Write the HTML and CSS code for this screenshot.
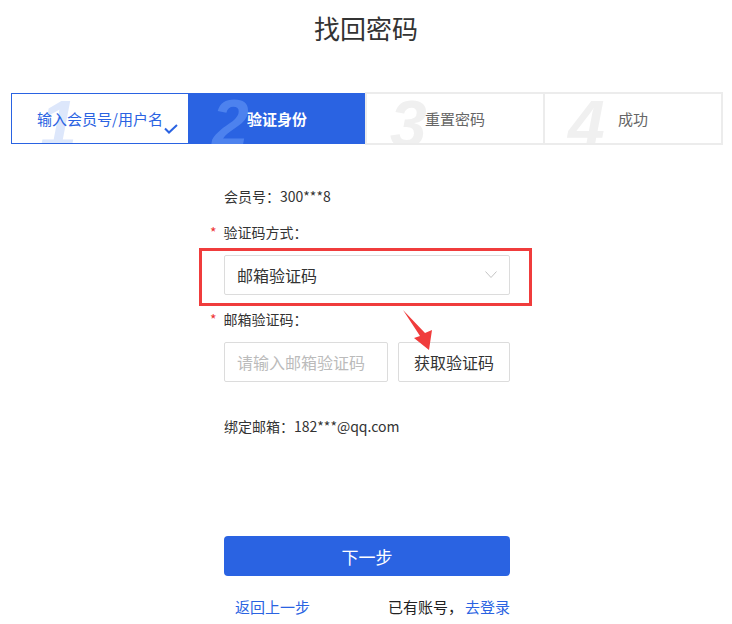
FILE: index.html
```html
<!DOCTYPE html>
<html lang="zh-CN">
<head>
    <meta charset="UTF-8">
    <title>找回密码</title>
    <link rel="stylesheet" href="styles.css">
</head>
<body>
    <h1 class="page-title">找回密码</h1>

    <div class="steps">
        <div class="step step-done">
            <span class="step-num" aria-hidden="true">1</span>
            <span class="step-text">输入会员号/用户名</span>
            <svg class="step-check" width="14" height="10" viewBox="0 0 14 10"><polyline points="1,4.5 5,8.5 13,1" fill="none" stroke="#2a63e2" stroke-width="2"/></svg>
        </div>
        <div class="step step-active">
            <span class="step-num" aria-hidden="true">2</span>
            <span class="step-text">验证身份</span>
        </div>
        <div class="step step-todo step-three">
            <span class="step-num" aria-hidden="true">3</span>
            <span class="step-text">重置密码</span>
        </div>
        <div class="step step-todo step-four">
            <span class="step-num" aria-hidden="true">4</span>
            <span class="step-text">成功</span>
        </div>
    </div>

    <div class="form">
        <div class="info-row">会员号：300***8</div>

        <div class="field-label required">验证码方式：</div>
        <div class="select-wrap">
            <div class="select-box">
                <span>邮箱验证码</span>
                <svg width="12" height="8" viewBox="0 0 12 8"><polyline points="0.5,0.5 6,6.5 11.5,0.5" fill="none" stroke="#c4c4c4" stroke-width="1"/></svg>
            </div>
            <div class="highlight-box"></div>
        </div>

        <div class="field-label required label-code">邮箱验证码：</div>
        <div class="code-row">
            <div class="code-input">请输入邮箱验证码</div>
            <button class="code-btn">获取验证码</button>
        </div>

        <div class="info-row info-mail">绑定邮箱：182***@qq.com</div>

        <button class="next-btn">下一步</button>

        <div class="bottom-links">
            <a class="link back-link">返回上一步</a>
            <span>已有账号，<a class="link login-link">去登录</a></span>
        </div>
    </div>

    <svg class="note-arrow" width="40" height="50" viewBox="0 0 40 50">
        <polygon points="3,5 25,28 32,25 29,45 14,33 20,31" fill="#f03c3c"/>
    </svg>
</body>
</html>
```

FILE: styles.css
```css
body {
    margin: 0;
    font-family: "Noto Sans CJK SC", "Liberation Sans", sans-serif;
    color: #333;
    background: #fff;
}

.page-title {
    margin: 10px 0 0;
    font-size: 26px;
    line-height: 36px;
    font-weight: normal;
    text-align: center;
    color: #333;
}

/* 步骤条 */
.steps {
    display: flex;
    align-items: center;
    margin: 46px 9px 0 11px;
}

.step {
    position: relative;
    flex: 1;
    height: 51px;
    box-sizing: border-box;
    display: flex;
    align-items: center;
    justify-content: center;
    overflow: hidden;
    font-size: 15px;
}

.step-num {
    position: absolute;
    top: -3px;
    left: 23px;
    font-family: "Liberation Sans", sans-serif;
    font-size: 66px;
    line-height: 1;
    font-weight: bold;
    font-style: italic;
}

.step-text {
    position: relative;
}

.step-done {
    border: 1px solid #2a63e2;
    color: #2a63e2;
}

.step-done .step-num {
    color: #dde7fb;
    left: 28px;
}

.step-check {
    position: absolute;
    left: 152px;
    top: 30px;
}

.step-active {
    background: #2a63e2;
    color: #fff;
    font-weight: bold;
}

.step-active .step-num {
    color: #4d82ee;
}

.step-todo {
    height: 53px;
    border: 2px solid #ececec;
    color: #666;
}

.step-todo .step-num {
    color: #f0f0f0;
}

.step-three {
    border-right-width: 1px;
}

.step-four {
    border-left-width: 1px;
}

/* 表单 */
.form {
    width: 286px;
    margin: 41px 0 0 calc(50% - 142px);
    font-size: 14px;
}

.info-row {
    line-height: 20px;
}

.field-label {
    margin-top: 16px;
    line-height: 20px;
}

.required::before {
    content: "*";
    color: #e33;
    margin-left: -14px;
    margin-right: 7px;
}

.label-code {
    margin-top: 14px;
}

.select-wrap {
    position: relative;
    margin-top: 13px;
}

.select-box {
    height: 40px;
    box-sizing: border-box;
    border: 1px solid #dcdcdc;
    border-radius: 2px;
    padding: 0 12px;
    display: flex;
    align-items: center;
    justify-content: space-between;
    font-size: 16px;
    color: #333;
}

.highlight-box {
    position: absolute;
    top: -7px;
    left: -25px;
    right: -22px;
    bottom: -11px;
    border: 3px solid #f03c3c;
}

.code-row {
    display: flex;
    gap: 10px;
    margin-top: 13px;
}

.code-input,
.code-btn {
    height: 40px;
    box-sizing: border-box;
    border: 1px solid #dcdcdc;
    border-radius: 2px;
    font-size: 16px;
    font-family: inherit;
    background: #fff;
}

.code-input {
    width: 164px;
    padding-left: 12px;
    line-height: 38px;
    color: #bbb;
}

.code-btn {
    flex: 1;
    color: #333;
    padding: 0;
}

.info-mail {
    margin-top: 34px;
}

.next-btn {
    display: block;
    width: 100%;
    height: 40px;
    margin-top: 100px;
    border: none;
    border-radius: 4px;
    background: #2a63e2;
    color: #fff;
    font-size: 17px;
    font-family: inherit;
}

.bottom-links {
    display: flex;
    justify-content: space-between;
    margin-top: 21px;
    font-size: 15px;
    line-height: 20px;
    color: #222;
}

.link {
    color: #2a63e2;
}

.back-link {
    margin-left: 11px;
}

.login-link {
    margin-left: 2px;
}

.note-arrow {
    position: absolute;
    left: 400px;
    top: 305px;
}
```
